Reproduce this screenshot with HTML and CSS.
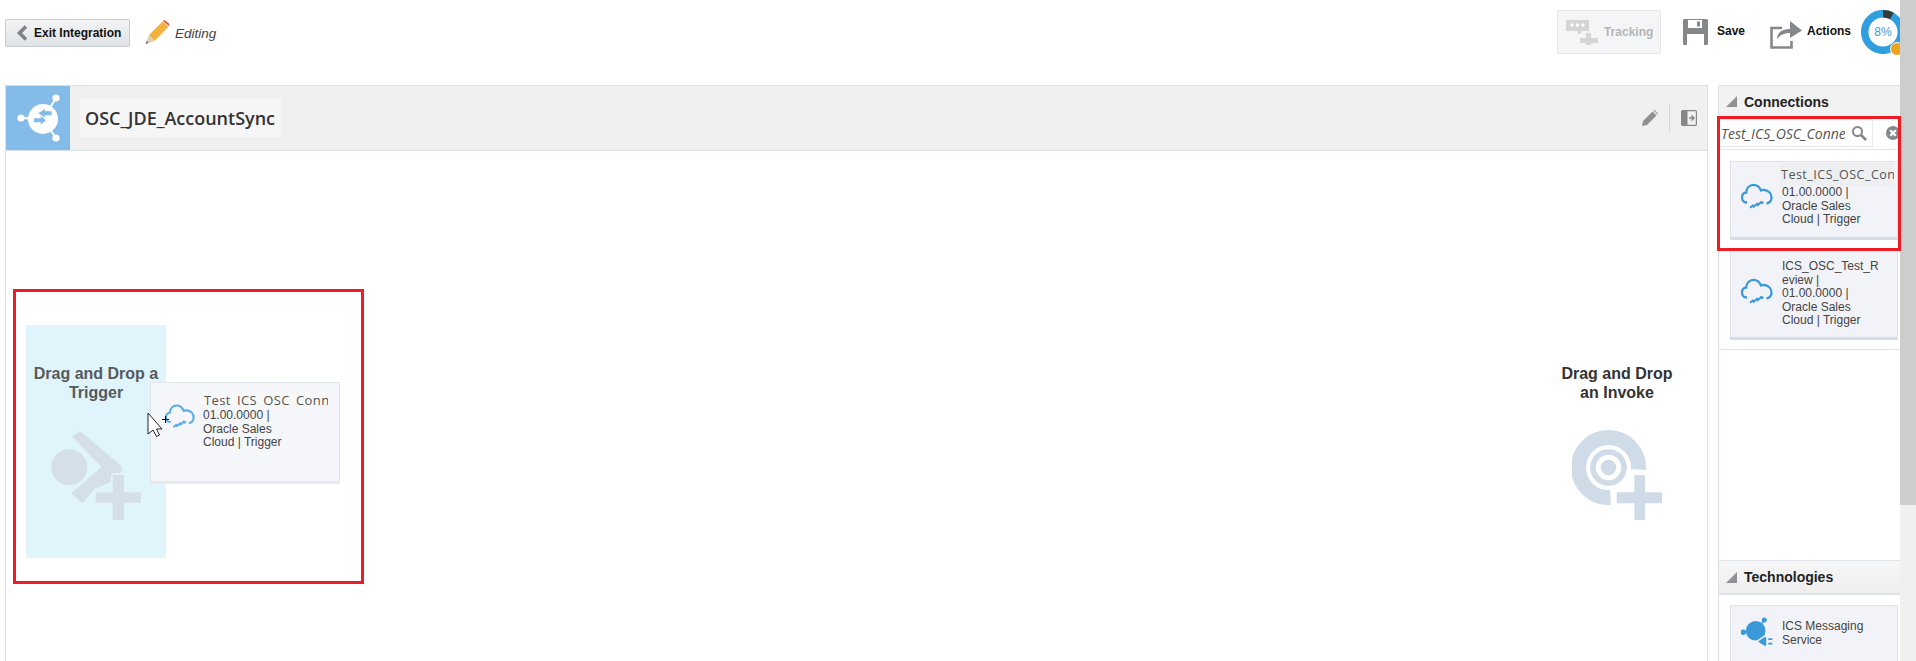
FILE: index.html
```html
<!DOCTYPE html>
<html lang="en">
<head>
  <meta charset="UTF-8">
  <meta name="viewport" content="width=device-width, initial-scale=1.0">
  <title>OSC_JDE_AccountSync</title>
  <link rel="stylesheet" href="styles.css">
</head>
<body>

  <svg class="defs" width="0" height="0">
    <symbol id="cloud" viewBox="0 0 32 26">
      <path d="M6 19.500C2.500 19.500 1 17 1 14.500 1 11.500 3 9.500 5.200 9.500 5.500 5 8.500 1.800 12.500 1.800 16 1.800 18.500 4 20 7.500 21 7 22 6.800 23.500 7 27.500 7.500 30.500 10.500 30.500 14.500 30.500 17.500 28.500 20 25.500 20.500" fill="none" stroke="currentColor" stroke-width="2.300"/>
      <path d="M9 24.800l3-2.300.8 1.300 3.200-3 .8 1.300 3.200-3 .8 1 1.500-1.200" fill="none" stroke="currentColor" stroke-width="2"/>
    </symbol>
  </svg>

  <div class="page">
    <div class="content">

      <!-- top toolbar -->
      <header class="toolbar">
        <button class="exit-btn">
          <svg width="11" height="16" viewBox="0 0 11 16"><path d="M9 1.500L2.500 8 9 14.500" fill="none" stroke="#7f8386" stroke-width="3.600"/></svg>
          Exit Integration
        </button>
        <svg class="pencil" width="25" height="25" viewBox="0 0 25 25">
          <path d="M4 15L17.500 1.500l6 5L9.500 21z" fill="#f4b13c"/>
          <path d="M18 1L19.500 0l5 4-.8 2z" fill="#e2543e"/>
          <path d="M4 15L.5 24l9-3z" fill="#dccfb4"/>
          <path d="M1.700 21L.5 24l3-1z" fill="#666"/>
        </svg>
        <span class="editing">Editing</span>

        <div class="tools">
          <div class="tracking-btn">
            <svg width="32" height="26" viewBox="0 0 32 26">
              <path d="M0 1h23v11h-8v3h-3v-3H0z" fill="#d4d5d6"/>
              <circle cx="6" cy="6" r="1.700" fill="#fff"/><circle cx="11.500" cy="6" r="1.700" fill="#fff"/><circle cx="17" cy="6" r="1.700" fill="#fff"/>
              <path d="M20 14h5v5h7v5h-7v2h-5v-2h-6v-5h6z" fill="#d4d5d6"/>
            </svg>
            Tracking
          </div>
          <svg class="save-icon" width="25" height="26" viewBox="0 0 25 26">
            <path d="M1.500 0h22A1.500 1.500 0 0 1 25 1.500v23a1.500 1.500 0 0 1-1.500 1.500h-22A1.500 1.500 0 0 1 0 24.500v-23A1.500 1.500 0 0 1 1.500 0z" fill="#85888b"/>
            <path d="M5 1h14v8H5z" fill="#fff"/><path d="M14 2.500h3v5h-3z" fill="#85888b"/>
            <path d="M4 15h17v11H4z" fill="#fff"/>
          </svg>
          <span class="tool-label save-label">Save</span>
          <svg class="actions-icon" width="32" height="30" viewBox="0 0 32 30">
            <path d="M12 9H1.500v19.500h20V22" fill="none" stroke="#85888b" stroke-width="2.600"/>
            <path d="M7 20c0-6 5-10 13-10V2l12 9.500L20 19v-5c-6 0-10 2-13 6z" fill="#85888b"/>
          </svg>
          <span class="tool-label">Actions</span>
          <div class="progress">
            <svg width="44" height="44" viewBox="0 0 44 44">
              <circle cx="22" cy="22" r="18.300" fill="none" stroke="#2f9fdf" stroke-width="7.500"/>
              <circle cx="22" cy="22" r="18.300" fill="none" stroke="#3a3a3a" stroke-width="7.500" pathLength="100" stroke-dasharray="8 92" transform="rotate(-90 22 22)"/>
            </svg>
            <span class="progress-text">8%</span>
            <span class="progress-badge"></span>
          </div>
        </div>
      </header>

      <div class="workspace">

        <!-- integration canvas -->
        <section class="canvas-panel">
          <div class="canvas-head">
            <div class="head-icon">
              <svg width="64" height="64" viewBox="0 0 64 64">
                <path d="M37 33L50 12M37 33L15 32M37 33L50 52" stroke="#fff" stroke-width="2"/>
                <circle cx="37" cy="33" r="15" fill="#fff"/>
                <circle cx="50" cy="12" r="3.600" fill="#fff"/><circle cx="15" cy="32" r="3.600" fill="#fff"/><circle cx="50" cy="52" r="3.600" fill="#fff"/>
                <path d="M32.300 27.300L39 23v2.300h6.700v4H39v2.300z" fill="#85bbe8"/>
                <path d="M40 34.300L34.700 30v2.300H28v4h6.700v2.300z" fill="#85bbe8"/>
              </svg>
            </div>
            <div class="canvas-title">OSC_JDE_AccountSync</div>
            <div class="head-tools">
              <svg width="16" height="16" viewBox="0 0 16 16"><path d="M0 16l1-5L10.500 1.500l4 4L5 15z M11.500.5l1-.5 3.500 3.500-.5 1z" fill="#8e9194"/></svg>
              <span class="head-sep"></span>
              <svg width="16" height="16" viewBox="0 0 16 16">
                <rect x=".6" y=".6" width="14.800" height="14.800" rx="1" fill="none" stroke="#85888b" stroke-width="1.200"/>
                <rect x="1" y="1" width="5.500" height="14" fill="#85888b"/>
                <path d="M8 8h4M10.500 5.500L13 8l-2.500 2.500" fill="none" stroke="#85888b" stroke-width="1.500"/>
              </svg>
            </div>
          </div>

          <div class="canvas">
            <div class="drop-zone drop-active">
              <div class="drop-text muted">Drag and Drop a<br>Trigger</div>
              <svg width="90" height="91" viewBox="0 0 90 91">
                <circle cx="18.300" cy="37.300" r="18" fill="#d5dfe9"/>
                <path d="M21.700 6.700L29 1.700 70 36v6L60 43l-1 9-15 6-13 15-10-10 30-26z" fill="#d5dfe9" stroke="#d5dfe9" stroke-linejoin="round"/>
                <path d="M62.700 45h9.300c.6 0 1 .4 1 1v16.300h16c.6 0 1 .4 1 1v8.400c0 .6-.4 1-1 1H73V89c0 .6-.4 1-1 1h-9.300c-.6 0-1-.4-1-1V72.700H45.700c-.6 0-1-.4-1-1v-8.400c0-.6.4-1 1-1h16V46c0-.6.4-1 1-1z" fill="#d5dfe9"/>
              </svg>
            </div>
            <div class="drop-zone">
              <div class="drop-text">Drag and Drop<br>an Invoke</div>
              <svg width="90" height="91" viewBox="0 0 90 91">
                <path d="M38.500 67.500A30 30 0 1 1 66.500 39.500" fill="none" stroke="#cfdbe6" stroke-width="15"/>
                <circle cx="36.500" cy="37.500" r="15.500" fill="none" stroke="#cfdbe6" stroke-width="5.600"/>
                <circle cx="36.500" cy="37.500" r="7.800" fill="#cfdbe6"/>
                <path d="M63.300 45h8.700c.6 0 1 .4 1 1v16.300h16c.6 0 1 .4 1 1v9c0 .6-.4 1-1 1H73V89c0 .6-.4 1-1 1h-8.700c-.6 0-1-.4-1-1V73.300H45.700c-.6 0-1-.4-1-1v-9c0-.6.4-1 1-1h16.600V46c0-.6.4-1 1-1z" fill="#cfdbe6"/>
              </svg>
            </div>

            <!-- card being dragged -->
            <div class="drag-card">
              <svg class="cloud" width="30" height="26"><use href="#cloud"/></svg>
              <div class="card-body">
                <div class="card-title clipped">Test_ICS_OSC_Connection</div>
                <div class="card-text">01.00.0000 |<br>Oracle Sales<br>Cloud | Trigger</div>
              </div>
            </div>
            <svg class="pointer" width="24" height="26" viewBox="0 0 24 26">
              <path d="M1 1v21l5-4 3.500 6.500 3-1.500L9.500 17H15z" fill="#fff" stroke="#222" stroke-width="1"/>
              <path d="M15 7.500h7M18.500 4v7" stroke="#111" stroke-width="1"/>
            </svg>
          </div>
        </section>

        <!-- palette on the right -->
        <aside class="side-panel">
          <div class="side-head">
            <span class="corner"></span>Connections
          </div>
          <div class="search-row">
            <div class="search-box">
              <span class="search-text">Test_ICS_OSC_Connection</span>
              <svg width="16" height="16" viewBox="0 0 16 16"><circle cx="6.500" cy="6.500" r="4.500" fill="none" stroke="#85888b" stroke-width="2"/><path d="M10 10l5 5" stroke="#85888b" stroke-width="2.600"/></svg>
            </div>
            <svg class="clear-icon" width="14" height="14" viewBox="0 0 14 14"><circle cx="7" cy="7" r="7" fill="#85888b"/><path d="M4.200 4.200l5.600 5.600M9.800 4.200l-5.600 5.600" stroke="#fff" stroke-width="2.200"/></svg>
          </div>
          <div class="card-list">
            <div class="conn-card">
              <svg class="cloud" width="32" height="26"><use href="#cloud"/></svg>
              <div class="card-body">
                <div class="card-title">Test_ICS_OSC_Connection</div>
                <div class="card-text">01.00.0000 |<br>Oracle Sales<br>Cloud | Trigger</div>
              </div>
            </div>
            <div class="conn-card conn-card-tall">
              <svg class="cloud" width="32" height="26"><use href="#cloud"/></svg>
              <div class="card-body">
                <div class="card-text">ICS_OSC_Test_R<br>eview |<br>01.00.0000 |<br>Oracle Sales<br>Cloud | Trigger</div>
              </div>
            </div>
          </div>
          <div class="side-head side-head-tech">
            <span class="corner"></span>Technologies
          </div>
          <div class="card-list tech-list">
            <div class="tech-card">
              <svg class="cloud" width="32" height="30" viewBox="0 0 32 30">
                <path d="M14.700 14.700L23.300 4M14.700 14.700L2.300 16.300" stroke="#3a9ad9" stroke-width="1.500"/>
                <circle cx="23.300" cy="4" r="2.500" fill="#3a9ad9"/><circle cx="2.300" cy="16.300" r="2.700" fill="#3a9ad9"/>
                <circle cx="14.700" cy="14.700" r="9.800" fill="#3a9ad9"/>
                <path d="M15.700 25.700L23 20.500h3v10h-3z" fill="#3a9ad9" stroke="#f1f3f8" stroke-width="1.500"/>
                <path d="M27.300 22.300h4V24h-4zM27.300 26.700h4v1.700h-4z" fill="#3a9ad9"/>
              </svg>
              <div class="card-text">ICS Messaging<br>Service</div>
            </div>
          </div>
        </aside>
      </div>
    </div>

    <div class="scrollbar"><div class="scroll-thumb"></div></div>

    <!-- red callouts drawn over the screen -->
    <div class="callout callout-drop"></div>
    <div class="callout callout-search"></div>
  </div>

</body>
</html>
```

FILE: styles.css
```css
/* Base */
html, body {
  margin: 0;
  height: 661px;
  overflow: hidden;
  background: #fff;
  font-family: 'Liberation Sans', Arial, sans-serif;
  color: #333;
}

.defs {
  position: absolute;
}

.page {
  position: relative;
  display: flex;
  height: 661px;
}

.content {
  width: 1900px;
  overflow: hidden;
}

/* Toolbar */
.toolbar {
  display: flex;
  align-items: center;
  height: 64px;
  margin-bottom: 21px;
  padding-left: 5px;
}

.exit-btn {
  display: flex;
  align-items: center;
  gap: 6px;
  box-sizing: border-box;
  width: 125px;
  height: 28px;
  margin-top: 2px;
  padding: 0 0 0 11px;
  border: 1px solid #c6ccd2;
  border-radius: 2px;
  background: linear-gradient(#f3f4f5, #dfe3e6);
  font: bold 12px 'Liberation Sans', Arial, sans-serif;
  color: #111;
}

.pencil {
  margin: 0 0 0 15px;
}

.editing {
  margin-left: 5px;
  margin-top: 2px;
  font-size: 13.5px;
  font-style: italic;
  color: #444;
}

.tools {
  display: flex;
  align-items: center;
  margin-left: auto;
  margin-right: -5px;
}

.tracking-btn {
  display: flex;
  align-items: center;
  gap: 6px;
  box-sizing: border-box;
  width: 104px;
  height: 44px;
  padding-left: 8px;
  border: 1px solid #e4e7ea;
  border-radius: 2px;
  background: #f4f5f7;
  font-size: 12px;
  font-weight: bold;
  color: #b4b5b6;
}

.save-icon {
  margin-left: 22px;
}

.tool-label {
  font-size: 12px;
  font-weight: bold;
  color: #111;
  margin-left: 5px;
  margin-top: -2px;
}

.save-label {
  margin-left: 9px;
}

.actions-icon {
  margin-left: 25px;
  margin-top: 4px;
}

.progress {
  position: relative;
  width: 44px;
  height: 44px;
  margin-left: 10px;
}

.progress-text {
  position: absolute;
  top: 15px;
  left: 0;
  width: 44px;
  text-align: center;
  font-size: 12px;
  color: #4a95d8;
}

.progress-badge {
  position: absolute;
  left: 29px;
  top: 32px;
  width: 14px;
  height: 14px;
  border-radius: 50%;
  background: #eda21a;
  border: 1px solid #fff;
  box-sizing: border-box;
}

/* Workspace */
.workspace {
  display: flex;
  gap: 10px;
  height: 576px;
  padding-left: 5px;
}

.canvas-panel {
  display: flex;
  flex-direction: column;
  box-sizing: border-box;
  width: 1703px;
  border: 1px solid #d8e0e8;
  border-bottom: 0;
}

.canvas-head {
  display: flex;
  align-items: center;
  height: 65px;
  flex-shrink: 0;
  box-sizing: border-box;
  border-bottom: 1px solid #d8e0e8;
  background: #f0f0f0;
}

.head-icon {
  width: 64px;
  height: 64px;
  background: #85bbe8;
}

.canvas-title {
  margin-left: 10px;
  padding: 0 5px;
  width: 201px;
  box-sizing: border-box;
  height: 38px;
  line-height: 38px;
  background: #f6f6f6;
  font-family: 'Open Sans', sans-serif;
  font-size: 18px;
  font-weight: 600;
  color: #333;
  white-space: nowrap;
}

.head-tools {
  display: flex;
  align-items: center;
  margin-left: auto;
  margin-right: 10px;
}

.head-sep {
  width: 1px;
  height: 28px;
  margin: 0 11px 0 11px;
  background: #d8d8d8;
}

/* Canvas */
.canvas {
  position: relative;
  display: flex;
  justify-content: space-between;
  padding: 174px 20px 0 20px;
  flex: 1;
}

.drop-zone {
  display: flex;
  flex-direction: column;
  align-items: center;
  box-sizing: border-box;
  width: 140px;
  height: 233px;
  padding-top: 39px;
}

.drop-active {
  background: #dff4fb;
}

.drop-text {
  height: 66px;
  font-size: 16px;
  font-weight: bold;
  line-height: 19px;
  text-align: center;
  color: #333;
  white-space: nowrap;
}

.drop-text.muted {
  color: #58595b;
}

.drag-card {
  position: absolute;
  left: 144px;
  top: 231px;
  display: flex;
  box-sizing: border-box;
  width: 190px;
  height: 102px;
  padding: 10px 0 0 14px;
  border: 1px solid #e0e6ec;
  border-bottom: 3px solid #e3e9ef;
  background: rgba(244, 246, 250, 0.95);
}

.drag-card .cloud {
  margin: 10px 8px 0 0;
  color: #5aaee3;
}

.pointer {
  position: absolute;
  left: 141px;
  top: 261px;
}

/* Side panel */
.side-panel {
  box-sizing: border-box;
  width: 182px;
  border-left: 1px solid #d8e0e8;
  border-top: 1px solid #d8e0e8;
  overflow: hidden;
}

.side-head {
  display: flex;
  align-items: center;
  height: 31px;
  padding-left: 7px;
  background: #f2f2f2;
  font-size: 14px;
  font-weight: bold;
  color: #222;
}

.side-head-tech {
  height: 32px;
  margin-top: 210px;
  border-top: 1px solid #dfe4e8;
  border-bottom: 2px solid #dce3ea;
  background: linear-gradient(#f6f6f6, #eeeeee);
}

.corner {
  width: 0;
  height: 0;
  margin-right: 7px;
  border-style: solid;
  border-width: 0 0 11px 11px;
  border-color: transparent transparent #909396 transparent;
}

.search-row {
  display: flex;
  align-items: center;
  height: 32px;
  border-bottom: 1px solid #dfe4e8;
}

.search-box {
  display: flex;
  align-items: center;
  box-sizing: border-box;
  width: 154px;
  height: 28px;
  padding: 0 4px 0 2px;
  border: 1px solid #e8ebee;
  border-left: 0;
}

.search-text {
  width: 124px;
  margin-right: 6px;
  overflow: hidden;
  white-space: nowrap;
  font-family: 'Open Sans', sans-serif;
  font-size: 14px;
  font-style: italic;
  color: #555;
}

.clear-icon {
  margin-left: 13px;
}

.card-list {
  display: flex;
  flex-direction: column;
  gap: 10px;
  height: 200px;
  box-sizing: border-box;
  padding: 11px 0 0 11px;
  border-bottom: 1px solid #dfe4e8;
}

.conn-card,
.tech-card {
  display: flex;
  align-items: flex-start;
  flex-shrink: 0;
  box-sizing: border-box;
  width: 168px;
  height: 79px;
  padding: 1px 0 0 10px;
  border: 1px solid #dbe2e8;
  border-bottom: 3px solid #d5dde4;
  background: #f1f3f8;
}

.conn-card .cloud,
.tech-card .cloud {
  flex-shrink: 0;
  margin: 20px 9px 0 0;
  color: #3a9ad9;
}

.conn-card-tall {
  height: 90px;
  align-items: center;
  padding-top: 0;
}

.conn-card-tall .cloud {
  margin-top: -6px;
}

.card-body {
  min-width: 0;
}

.card-title {
  width: 114px;
  height: 23px;
  margin-left: -2px;
  padding-left: 1px;
  box-sizing: border-box;
  overflow: hidden;
  white-space: nowrap;
  background: #eeeff1;
  font-family: 'Open Sans', sans-serif;
  font-size: 12.500px;
  letter-spacing: 0.5px;
  line-height: 24px;
  color: #555;
}

.card-title.clipped {
  width: 125px;
  height: 12px;
  margin-left: 0;
  margin-bottom: 4px;
  font-size: 13px;
  letter-spacing: 0.4px;
  line-height: 15px;
  background: #f8f8f6;
}

.card-text {
  font-size: 12px;
  line-height: 13.500px;
  color: #444;
  white-space: nowrap;
}

.tech-list {
  height: auto;
  padding-top: 10px;
  border-bottom: 0;
}

.tech-card {
  height: 80px;
  padding-top: 14px;
  border-bottom: 0;
}

.tech-card .cloud {
  margin-top: -4px;
}

/* Scrollbar */
.scrollbar {
  width: 16px;
  height: 661px;
  background: #f0f0f0;
}

.scroll-thumb {
  height: 505px;
  background: #cdcdcd;
}

/* Red callouts */
.callout {
  position: absolute;
  box-sizing: border-box;
  border: 3px solid #ee1c25;
}

.callout-drop {
  left: 13px;
  top: 289px;
  width: 351px;
  height: 295px;
}

.callout-search {
  left: 1717px;
  top: 116px;
  width: 184px;
  height: 135px;
}
```
